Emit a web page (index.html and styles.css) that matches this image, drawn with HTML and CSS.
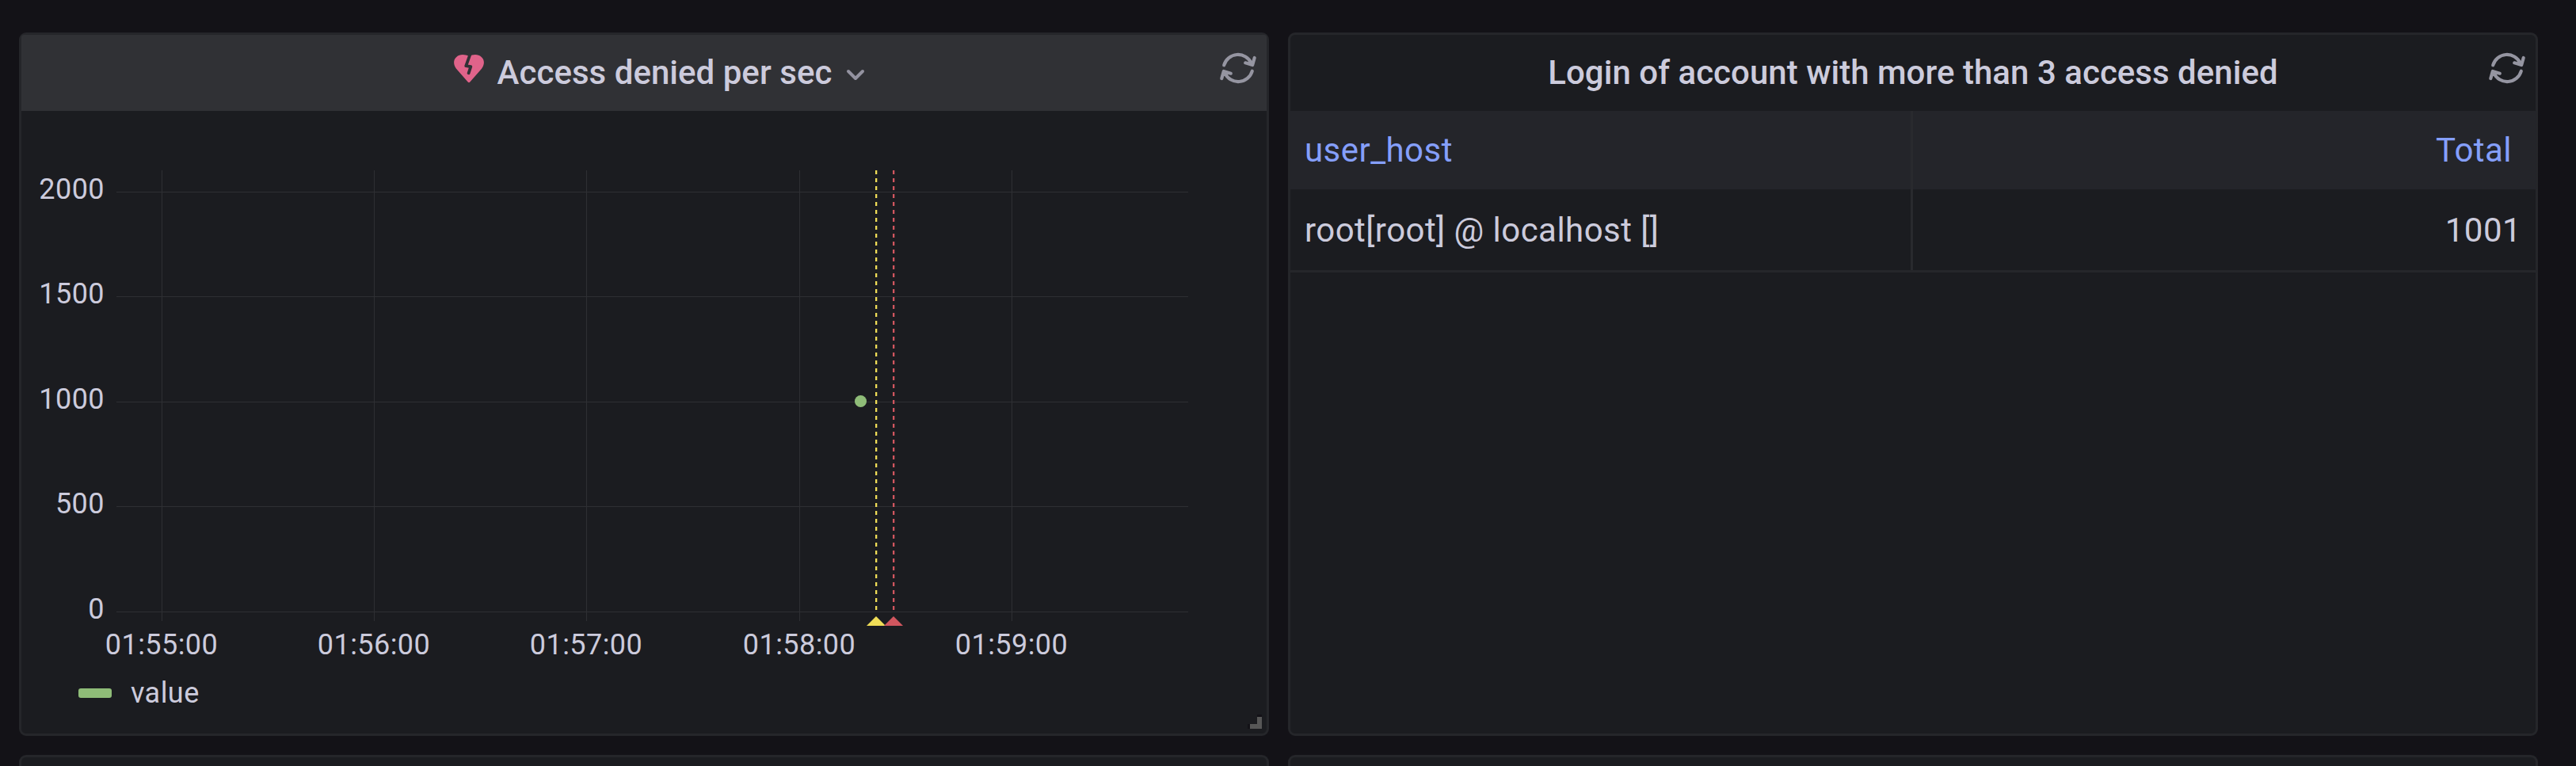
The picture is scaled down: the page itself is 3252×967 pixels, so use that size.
FILE: index.html
```html
<!DOCTYPE html>
<html lang="en">
<head>
<meta charset="utf-8">
<title>Dashboard</title>
<link rel="stylesheet" href="styles.css">
</head>
<body>
<svg class="sprite" width="0" height="0">
  <symbol id="sync" viewBox="0 0 48 48">
    <path d="M6.2 20.3A18.4 18.4 0 0 1 40.6 17.6M33.2 17.3L42.2 20L44.7 11M41.8 27.7A18.4 18.4 0 0 1 7.4 30.4M14.8 30.7L5.8 28L3.3 37"/>
  </symbol>
</svg>
<main class="dashboard">
  <section class="panel">
    <header class="panel-header panel-header-hover">
      <svg class="heart" viewBox="0 0 38 36">
        <path class="heart-fill" d="M17.700 34.600L3 17.800C-1 12.500-.8 6.300 3.200 2.900C7.500-.8 13.500-.6 19 2C24.500-.6 30.500-.8 34.800 2.900C38.800 6.300 39 12.500 35 17.800L20.300 34.600Q19 36 17.700 34.600Z"/>
        <path class="heart-crack" d="M20.700-1L15.300 14.200L21.300 15.200L18.600 23.300"/>
      </svg>
      <h2 class="panel-title">Access denied per sec</h2>
      <svg class="chevron" viewBox="0 0 24 16"><path d="M3 3L12 12L21 3"/></svg>
      <svg class="sync"><use href="#sync"/></svg>
    </header>
    <div class="panel-body">
      <svg class="chart" viewBox="27 140 1572 714">
        <path class="grid" d="M147 242.500H1500M147 374.500H1500M147 507.500H1500M147 639.500H1500M147 772.500H1500M204.500 215V784M472.500 215V784M740.500 215V784M1009.500 215V784M1277.500 215V784"/>
        <g class="label label-y">
          <text x="132" y="251">2000</text>
          <text x="132" y="383">1500</text>
          <text x="132" y="516">1000</text>
          <text x="132" y="648">500</text>
          <text x="132" y="781">0</text>
        </g>
        <g class="label label-x">
          <text x="204" y="826">01:55:00</text>
          <text x="472" y="826">01:56:00</text>
          <text x="740" y="826">01:57:00</text>
          <text x="1009" y="826">01:58:00</text>
          <text x="1277" y="826">01:59:00</text>
        </g>
        <circle class="point" cx="1086.500" cy="506.500" r="7.500"/>
        <path class="mark mark-pending" d="M1106.150 215V771"/>
        <path class="mark mark-alert" d="M1128.150 215V771"/>
        <path class="flag-pending" d="M1094 790L1106 778L1118 790Z"/>
        <path class="flag-alert" d="M1116 790L1128 778L1140 790Z"/>
      </svg>
      <div class="legend"><span class="swatch"></span><span>value</span></div>
    </div>
    <svg class="resize" viewBox="0 0 18 18"><path fill="#131217" d="M0 12H3V18H0ZM12 0H18V3H12Z"/><path fill="#575757" d="M3 12H12V3H18V18H3Z"/></svg>
  </section>
  <section class="panel">
    <header class="panel-header">
      <h2 class="panel-title">Login of account with more than 3 access denied</h2>
      <svg class="sync"><use href="#sync"/></svg>
    </header>
    <div class="table">
      <div class="row row-head"><div class="cell">user_host</div><div class="cell cell-num">Total</div></div>
      <div class="row"><div class="cell">root[root] @ localhost []</div><div class="cell cell-num">1001</div></div>
    </div>
  </section>
  <section class="panel panel-next"></section>
  <section class="panel panel-next"></section>
</main>
</body>
</html>
```
FILE: styles.css
```css
* { box-sizing: border-box; }
body {
  margin: 0;
  background: #131217;
  color: #cccbdc;
  font-family: Roboto, sans-serif;
  font-size: 42px;
  letter-spacing: 0.45px;
}
.sprite { position: absolute; }
.dashboard {
  display: grid;
  grid-template-columns: 1578px 1578px;
  grid-template-rows: 888px 14px;
  gap: 24px;
  height: 967px;
  padding: 41px 24px 0;
}
.panel {
  position: relative;
  background: #1b1c20;
  border: 3px solid #25262a;
  border-radius: 9px;
}
.panel-next {
  border-bottom: 0;
  border-radius: 9px 9px 0 0;
}
.panel-header {
  position: relative;
  display: flex;
  align-items: center;
  justify-content: center;
  height: 96px;
}
.panel-header-hover {
  padding-left: 39px;
  background: #303135;
  border-radius: 3px 3px 0 0;
}
.panel-title {
  margin: 0;
  font-size: 42px;
  font-weight: 500;
  letter-spacing: 0.03px;
  line-height: 96px;
}
.heart { width: 38px; height: 36px; margin: -11px 17px 0 0; }
.heart-fill { fill: #e0638a; }
.heart-crack {
  fill: none;
  stroke: #303135;
  stroke-width: 3.8;
  stroke-linecap: round;
  stroke-linejoin: round;
}
.chevron {
  width: 24px;
  height: 16px;
  margin: 6px 0 0 18px;
  fill: none;
  stroke: #9392a0;
  stroke-width: 4;
  stroke-linecap: round;
  stroke-linejoin: round;
}
.sync {
  position: absolute;
  right: 12px;
  top: 18px;
  width: 48px;
  height: 48px;
  fill: none;
  stroke: #9595a1;
  stroke-width: 4.2;
  stroke-linecap: round;
  stroke-linejoin: round;
}
.panel-body { display: flex; flex-direction: column; }
.chart { display: block; width: 1572px; height: 714px; }
.grid { fill: none; stroke: #2e2f33; stroke-width: 1; }
.label { fill: #cccbdc; font-size: 36px; letter-spacing: 0.45px; }
.label-y { text-anchor: end; }
.label-x { text-anchor: middle; }
.point { fill: #8fbc78; }
.mark { stroke-width: 2.3; stroke-dasharray: 5 5; }
.mark-pending { stroke: #f0dd57; }
.mark-alert { stroke: #d1565f; }
.flag-pending { fill: #f0dd57; }
.flag-alert { fill: #d1565f; }
.legend {
  display: flex;
  align-items: center;
  gap: 24px;
  height: 42px;
  padding-left: 72px;
  font-size: 36px;
  line-height: 42px;
}
.swatch {
  width: 42px;
  height: 12px;
  border-radius: 3px;
  background: #8fbc78;
}
.resize {
  position: absolute;
  right: 6px;
  bottom: 6px;
  width: 18px;
  height: 18px;
}
.row {
  display: grid;
  grid-template-columns: 786px 786px;
  height: 105px;
  border-bottom: 3px solid #25262a;
}
.row-head {
  height: 99px;
  border-bottom: 0;
  background: #24252a;
  color: #859ffb;
}
.cell { height: 102px; padding: 0 18px; line-height: 104px; }
.cell:first-child { border-right: 3px solid #292a2e; }
.cell-num { text-align: right; }
.row-head .cell { height: 99px; line-height: 99px; }
.row-head .cell-num { padding-right: 30px; }
```
